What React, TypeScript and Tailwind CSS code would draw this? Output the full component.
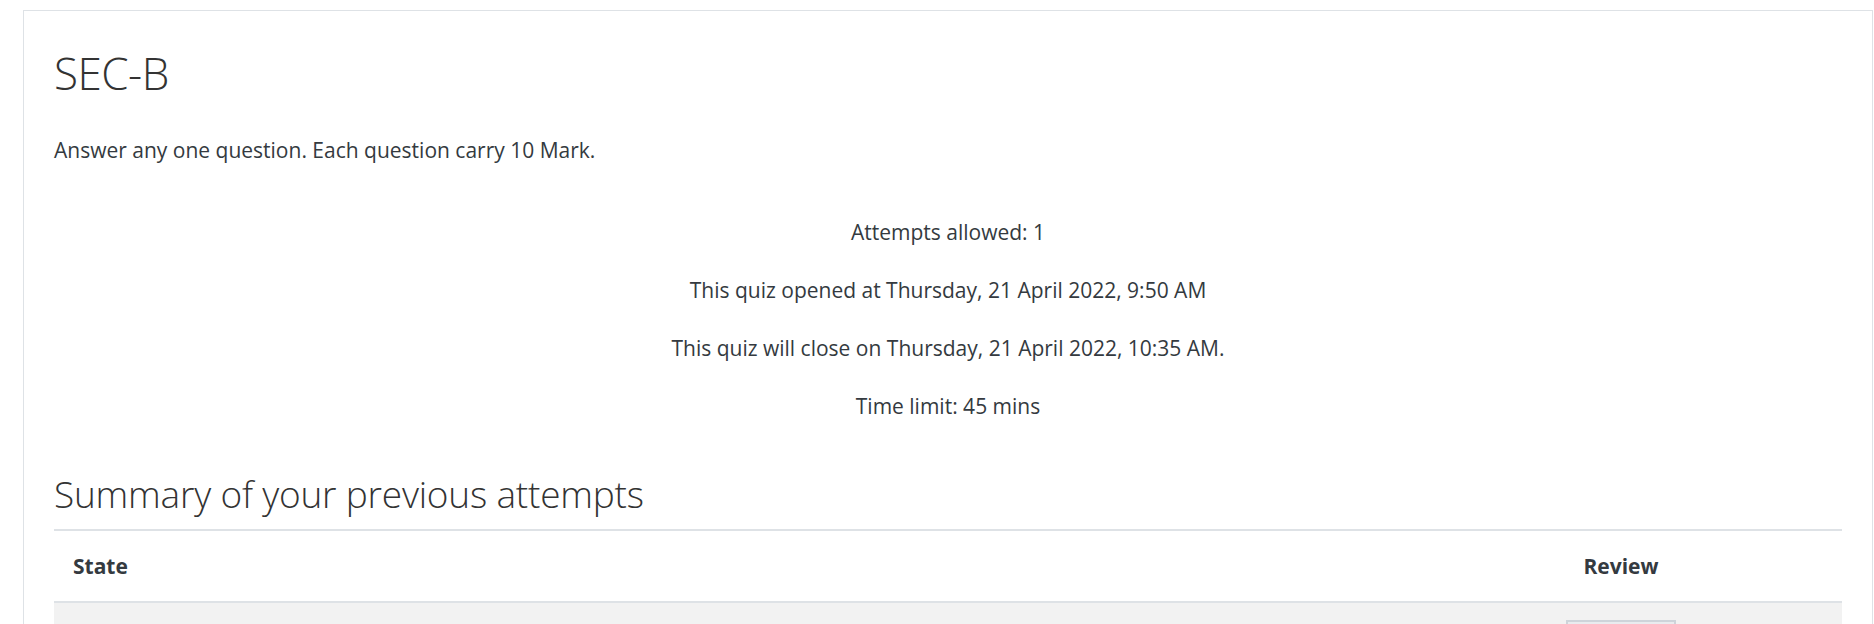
export default function App() {
  const font = { fontFamily: '"Open Sans", "Noto Sans", sans-serif' }
  return (
    <div className="bg-white pt-[10px] pl-[23px] pr-[1px] h-screen overflow-hidden text-[#343a40]" style={font}>
      <div className="border border-[#dee2e6] px-[30px] pt-[35px] pb-10">
        <h2 className="text-[44px] leading-[55px] font-light tracking-[-0.5px] text-[#333]">SEC-B</h2>
        <p className="mt-[34px] text-[21px] leading-[30px]">Answer any one question. Each question carry 10 Mark.</p>

        <div className="mt-[52px] flex flex-col items-center gap-[28px] text-[21px] leading-[30px]">
          <p>Attempts allowed: 1</p>
          <p>This quiz opened at Thursday, 21 April 2022, 9:50 AM</p>
          <p>This quiz will close on Thursday, 21 April 2022, 10:35 AM.</p>
          <p>Time limit: 45 mins</p>
        </div>

        <h3 className="mt-[49px] pb-[11px] text-[37px] leading-[48px] font-light tracking-[-0.2px] text-[#333]">
          Summary of your previous attempts
        </h3>

        <div className="border-t-2 border-[#dee2e6]">
          <div className="flex items-center border-b-2 border-[#dee2e6] py-5 text-[21px] leading-[30px] font-bold">
            <div className="flex-1 pl-[19px]">State</div>
            <div className="w-[442px] text-center">Review</div>
          </div>
          <div className="flex items-start bg-[#f2f2f2] pt-[17px] pb-4">
            <div className="flex-1" />
            <div className="w-[442px] flex justify-center">
              <button className="w-[110px] h-[40px] bg-[#e9ecef] border-2 border-[#ced4da]" />
            </div>
          </div>
        </div>
      </div>
    </div>
  )
}
